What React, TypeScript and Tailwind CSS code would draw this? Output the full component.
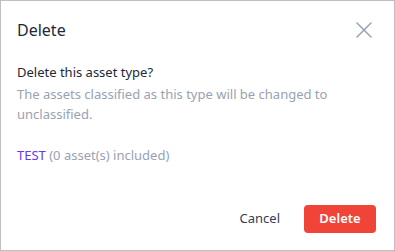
export default function App() {
  return (
    <div className="w-[395px] h-[251px] bg-white border border-[#bfbfbf] flex flex-col font-['Noto_Sans',sans-serif]">
      <div className="flex items-center justify-between pl-4 pr-[22px] pt-[17px]">
        <h2 className="text-base leading-6 text-[#1d2939]">Delete</h2>
        <button className="text-[#98a2b3]">
          <svg width="16" height="16" viewBox="0 0 16 16" fill="none" stroke="currentColor" strokeWidth={1.5} strokeLinecap="round">
            <path d="M1 1L15 15M15 1L1 15" />
          </svg>
        </button>
      </div>
      <div className="px-4 pt-[20px] text-[13px] leading-5">
        <p className="text-[#1d2939]">Delete this asset type?</p>
        <p className="text-[#98a2b3] mt-[2px] pr-4">
          The assets classified as this type will be changed to unclassified.
        </p>
        <p className="mt-[21px] text-[#98a2b3]">
          <span className="text-[#6938ef]">TEST</span> (0 asset(s) included)
        </p>
      </div>
      <div className="mt-auto flex items-center justify-end gap-6 px-[18px] pb-[17px]">
        <button className="text-[13px] text-[#344054]">Cancel</button>
        <button className="h-7 w-[72px] rounded bg-[#f04438] text-[13px] font-semibold text-white">
          Delete
        </button>
      </div>
    </div>
  );
}
